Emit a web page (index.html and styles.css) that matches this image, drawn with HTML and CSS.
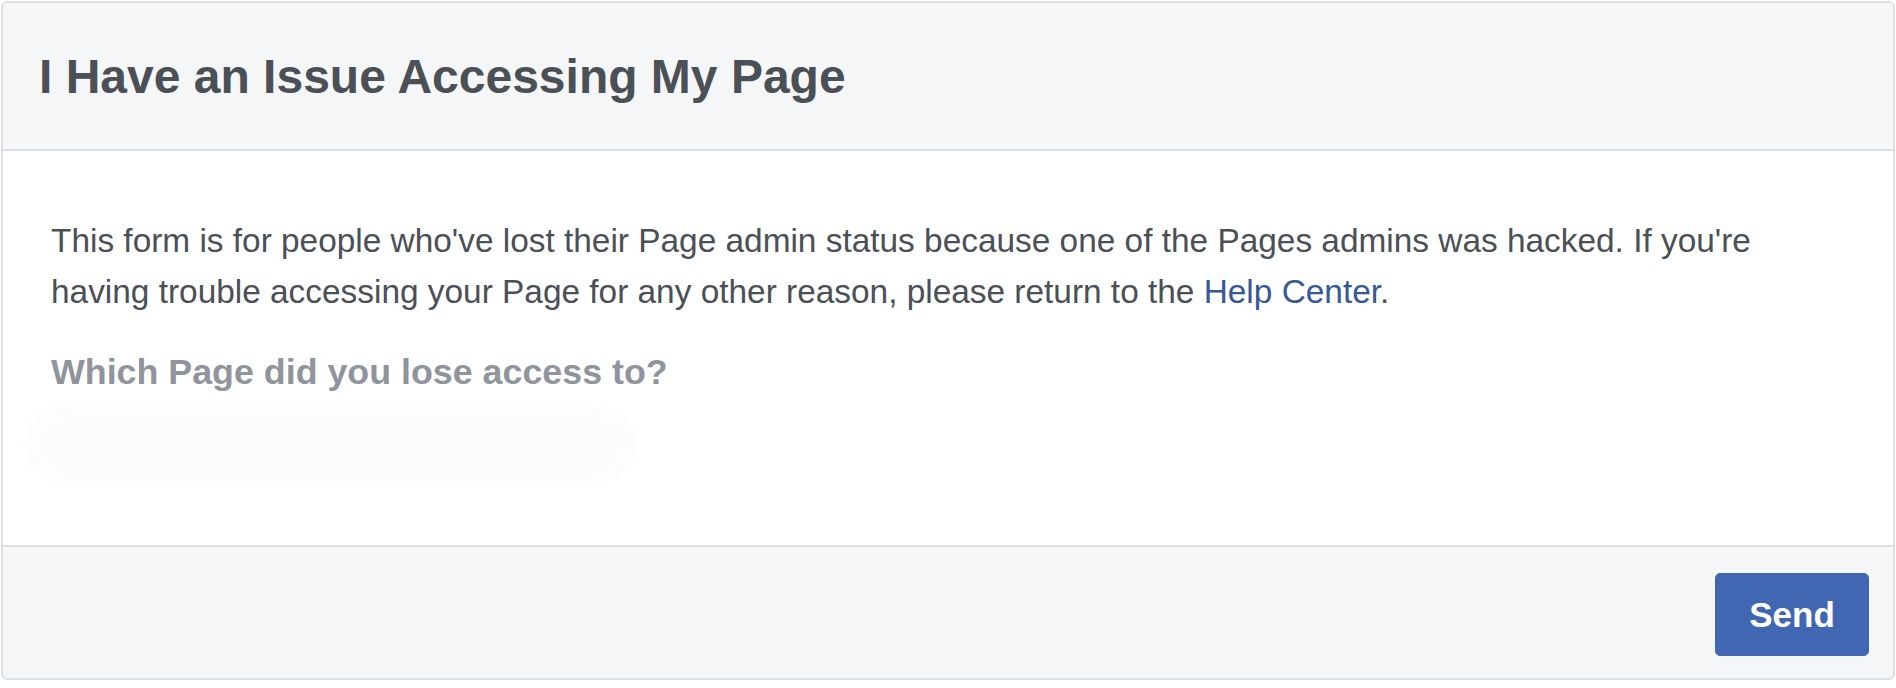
FILE: index.html
```html
<!DOCTYPE html>
<html lang="en">
<head>
<meta charset="utf-8">
<title>I Have an Issue Accessing My Page</title>
<link rel="stylesheet" href="styles.css">
</head>
<body>
<div class="page">
  <form class="card">
    <header class="card-header">
      <h1 class="title">I Have an Issue Accessing My Page</h1>
    </header>
    <section class="card-body">
      <p class="intro">This form is for people who've lost their Page admin status because one of the Pages admins was hacked. If you're having trouble accessing your Page for any other reason, please return to the <a class="link" href="#">Help Center</a>.</p>
      <label class="question" for="page-name">Which Page did you lose access to?</label>
      <div class="redacted-input" id="page-name"></div>
    </section>
    <footer class="card-footer">
      <button class="send-btn" type="button">Send</button>
    </footer>
  </form>
</div>
</body>
</html>
```
FILE: styles.css
```css
html, body {
  margin: 0;
  padding: 0;
  background: #ffffff;
}

body {
  font-family: "Liberation Sans", Arial, Helvetica, sans-serif;
  color: #4b4f56;
}

.page {
  padding: 1px 1px 0 1px;
}

.card {
  display: flex;
  flex-direction: column;
  border: 2px solid #dddfe2;
  border-radius: 6px;
  overflow: hidden;
  background: #ffffff;
}

.card-header {
  background: #f5f6f7;
  border-bottom: 2px solid #dddfe2;
  padding: 50px 36px 48px 36px;
}

.title {
  margin: 0;
  font-size: 48px;
  line-height: 48px;
  font-weight: bold;
  color: #4b4f56;
}

.card-body {
  display: flex;
  flex-direction: column;
  padding: 64px 48px 63px 48px;
}

.intro {
  margin: 0;
  font-size: 33.4px;
  line-height: 51px;
  color: #4b4f56;
}

.link {
  color: #365899;
  text-decoration: none;
}

.question {
  display: block;
  margin-top: 34px;
  font-size: 35.8px;
  line-height: 43px;
  font-weight: bold;
  color: #90949c;
}

.redacted-input {
  margin: 14px 0 0 -23px;
  width: 605px;
  height: 74px;
  border-radius: 34px;
  background: #fcfcfc;
  filter: blur(6px);
}

.card-footer {
  display: flex;
  justify-content: flex-end;
  background: #f5f6f7;
  border-top: 2px solid #dddfe2;
  padding: 26px 24px 22px 24px;
}

.send-btn {
  width: 154px;
  height: 83px;
  padding: 0;
  border: 1px solid #4267b2;
  border-radius: 5px;
  background: #4267b2;
  color: #ffffff;
  font-family: "Liberation Sans", Arial, Helvetica, sans-serif;
  font-size: 35px;
  line-height: 81px;
  font-weight: bold;
  cursor: pointer;
}
```
